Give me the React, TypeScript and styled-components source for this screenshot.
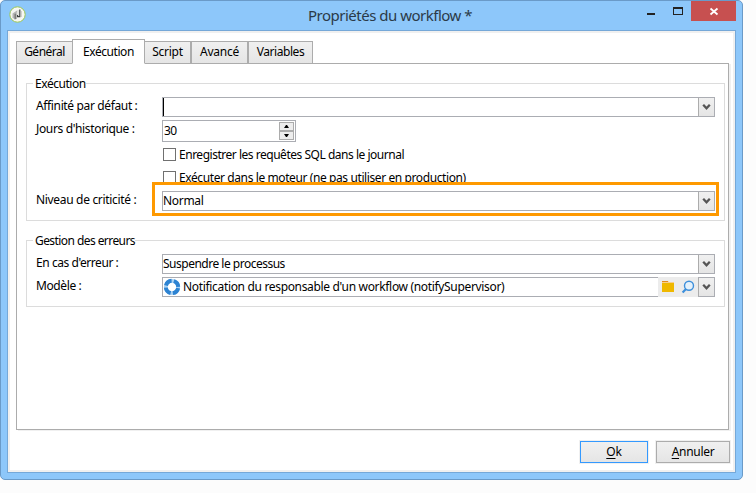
import React from 'react';
import styled, { createGlobalStyle, css } from 'styled-components';

const GlobalStyle = createGlobalStyle`
  *, *::before, *::after { box-sizing: border-box; }
  html, body { margin: 0; background: #fcfcfc; }
  body {
    font-family: 'Noto Sans', 'Open Sans', sans-serif;
    font-size: 12px;
    color: #000;
    overflow: hidden;
  }
`;

const Window = styled.div`
  width: 743px;
  height: 480px;
  padding: 0 6px 6px;
  display: flex;
  flex-direction: column;
  background: #8dc7fa;
  border: 1px solid #6a9ac8;
  border-radius: 5px;
`;

const TitleBar = styled.header`
  flex: none;
  height: 29px;
  display: grid;
  grid-template-columns: 300px 1fr auto;
  align-items: start;
`;

const AppIcon = styled.svg`
  display: block;
  margin: 5px 0 0 2px;
`;

const Title = styled.h1`
  margin: 0 0 0 1px;
  font-size: 15px;
  font-weight: 400;
  line-height: 29px;
  letter-spacing: -0.5px;
  color: #2b3a48;
  white-space: pre;
`;

const WindowControls = styled.div`
  display: flex;
  align-items: flex-start;
`;

const ControlButton = styled.button<{ $close?: boolean }>`
  width: ${(p) => (p.$close ? 45 : 27)}px;
  height: 20px;
  padding: 0;
  border: 0;
  background: ${(p) => (p.$close ? '#c75050' : 'transparent')};

  svg { display: block; }
`;

const Client = styled.main`
  flex: 1;
  display: flex;
  flex-direction: column;
  padding: 8px 5px 7px 6px;
  background: #fff;
  border: 1px solid #75a8d8;
  box-shadow: inset 0 0 0 2px #f0f0f0;
`;

const TabStrip = styled.nav`
  height: 25px;
  margin: 0 0 -1px 2px;
  display: flex;
  align-items: flex-end;
  position: relative;
`;

const Tab = styled.button<{ $width: number; $spacing: number; $active?: boolean }>`
  width: ${(p) => p.$width}px;
  height: 23px;
  padding: 0 0 1px;
  border: 1px solid #acacac;
  background: linear-gradient(#f0f0f0, #e5e5e5);
  font: inherit;
  line-height: 20px;
  color: inherit;
  letter-spacing: ${(p) => p.$spacing}px;
  ${(p) =>
    p.$active &&
    css`
      height: 25px;
      margin: 0 -1px;
      padding: 1px 0 0;
      background: #fff;
      border-bottom-color: #fff;
      z-index: 1;
    `}
`;

const Panel = styled.section`
  width: 713px;
  height: 367px;
  margin-left: 2px;
  padding: 19px 3px 0 9px;
  border: 1px solid #acacac;
  box-shadow: 2px 1px 0 #f0f0f0;
`;

const Group = styled.section<{ $height: number }>`
  height: ${(p) => p.$height}px;
  border: 1px solid #dcdcdc;

  & + & { margin-top: 19px; }
`;

const Legend = styled.h2<{ $spacing: number }>`
  width: max-content;
  height: 16px;
  margin: -9px 0 0 6px;
  padding: 0 0 0 2px;
  background: #fff;
  font-size: 12px;
  font-weight: 400;
  line-height: 17px;
  letter-spacing: ${(p) => p.$spacing}px;
`;

const Row = styled.div<{ $gap: number }>`
  display: grid;
  grid-template-columns: 126px 553px;
  align-items: start;
  margin: ${(p) => p.$gap}px 0 0 9px;
`;

const Label = styled.label<{ $spacing: number }>`
  line-height: 18px;
  letter-spacing: ${(p) => p.$spacing}px;
  white-space: nowrap;
`;

const Combo = styled.div`
  height: 20px;
  display: flex;
  background: #fff;
  border: 1px solid #abadb3;
`;

const Value = styled.span<{ $spacing: number }>`
  flex: 1;
  line-height: 17px;
  letter-spacing: ${(p) => p.$spacing}px;
  white-space: nowrap;
`;

const Caret = styled.i`
  width: 1px;
  height: 18px;
  background: #000;
  margin-right: auto;
`;

const DropButton = styled.span`
  width: 16px;
  display: grid;
  place-items: center;
  border-left: 1px solid #acacac;
  background: linear-gradient(#f0f0f0, #e5e5e5);
`;

const Tool = styled.span<{ $width: number }>`
  width: ${(p) => p.$width}px;
  height: 20px;
  margin: -1px 0;
  background: #ececec;

  svg { display: block; }
`;

const ModelIcon = styled.svg`
  margin: 0 2px 0 0;
`;

const Spinner = styled.div`
  width: 134px;
  height: 22px;
  display: flex;
  padding: 1px;
  border: 1px solid #abadb3;
`;

const SpinButtons = styled.span`
  display: grid;
  grid-template-rows: 9px 9px;
  width: 15px;
`;

const SpinButton = styled.span`
  display: grid;
  place-items: center;
  border: 1px solid #acacac;
  background: #ededed;
`;

const CheckLine = styled.label<{ $gap: number; $spacing: number }>`
  height: 13px;
  margin: ${(p) => p.$gap}px 0 0 136px;
  display: flex;
  align-items: center;
  gap: 3px;
  line-height: 17px;
  letter-spacing: ${(p) => p.$spacing}px;
  white-space: nowrap;
`;

const CheckBox = styled.span`
  flex: none;
  width: 13px;
  height: 13px;
  border: 1px solid #707070;
  background: #fff;
`;

const Highlighted = styled.div`
  position: relative;

  &::before {
    content: '';
    position: absolute;
    inset: -9px -4px -5px -10px;
    background: #fff;
    border: 3px solid #fe9900;
  }

  & > * { position: relative; }
`;

const Footer = styled.footer`
  display: flex;
  justify-content: flex-end;
  gap: 8px;
  margin-top: 11px;
`;

const PushButton = styled.button<{ $width: number; $primary?: boolean }>`
  width: ${(p) => p.$width}px;
  height: 22px;
  padding: 0;
  border: 1px solid ${(p) => (p.$primary ? '#3399ff' : '#acacac')};
  background: linear-gradient(#f0f0f0, #e5e5e5);
  box-shadow: 0 0 0 1px #f0f0f0;
  font: inherit;
  line-height: 20px;
  letter-spacing: ${(p) => (p.$primary ? -0.2 : -0.3)}px;
  color: inherit;

  u { text-underline-offset: 2px; text-decoration-skip-ink: none; }
`;

const Drop = () => (
  <DropButton>
    <svg width="9" height="8" viewBox="0 0 9 8">
      <path d="M1.2 1.7 4.5 5.2 7.8 1.7" fill="none" stroke="#555" strokeWidth="2.3" />
    </svg>
  </DropButton>
);

export default function App() {
  return (
    <>
      <GlobalStyle />
      <Window>
        <TitleBar>
          <AppIcon width="17" height="17" viewBox="0 0 17 17">
            <circle cx="8.5" cy="8.5" r="7.7" fill="#f6f7f3" stroke="#9bc653" />
            <path d="M3.5 7.5 8 4.5v2L6 8v5l-2.5-1z" fill="#b4b5b3" />
            <path d="M5.5 8 7.5 7v6l-2 .5z" fill="#7d7f7d" />
            <path d="M10.8 3.5v7.2H8.6V9" fill="none" stroke="#3f4240" strokeWidth="1.2" />
            <path d="M9 4v5M12.5 5v6" stroke="#d0d2ce" />
          </AppIcon>
          <Title>Propriétés du workflow *</Title>
          <WindowControls>
            <ControlButton aria-label="Réduire">
              <svg width="27" height="20" viewBox="0 0 27 20">
                <path d="M10 12h8v2h-8z" fill="#222" />
              </svg>
            </ControlButton>
            <ControlButton aria-label="Agrandir">
              <svg width="27" height="20" viewBox="0 0 27 20">
                <path d="M9 6h10v8H9zM10 8v5h8V8z" fill="#222" fillRule="evenodd" />
              </svg>
            </ControlButton>
            <ControlButton $close aria-label="Fermer">
              <svg width="45" height="20" viewBox="0 0 45 20">
                <path d="m19.5 7.5 7 6m0-6-7 6" stroke="#fff" strokeWidth="1.8" />
              </svg>
            </ControlButton>
          </WindowControls>
        </TitleBar>
        <Client>
          <TabStrip>
            <Tab $width={57} $spacing={-0.5}>Général</Tab>
            <Tab $width={73} $spacing={-0.45} $active>Exécution</Tab>
            <Tab $width={47} $spacing={-0.25}>Script</Tab>
            <Tab $width={57} $spacing={-0.25}>Avancé</Tab>
            <Tab $width={65} $spacing={-0.45}>Variables</Tab>
          </TabStrip>
          <Panel>
            <Group $height={138}>
              <Legend $spacing={-0.45}>Exécution</Legend>
              <Row $gap={6}>
                <Label $spacing={-0.36}>Affinité par défaut :</Label>
                <Combo><Caret /><Drop /></Combo>
              </Row>
              <Row $gap={3}>
                <Label $spacing={-0.35}>Jours d'historique :</Label>
                <Spinner>
                  <Value $spacing={-0.5}>30</Value>
                  <SpinButtons>
                    <SpinButton>
                      <svg width="5" height="3" viewBox="0 0 5 3"><path d="M0 3h5L3 0H2z" /></svg>
                    </SpinButton>
                    <SpinButton>
                      <svg width="5" height="3" viewBox="0 0 5 3"><path d="M0 0h5L3 3H2z" /></svg>
                    </SpinButton>
                  </SpinButtons>
                </Spinner>
              </Row>
              <CheckLine $gap={6} $spacing={-0.48}>
                <CheckBox />Enregistrer les requêtes SQL dans le journal
              </CheckLine>
              <CheckLine $gap={10} $spacing={-0.4}>
                <CheckBox />Exécuter dans le moteur (ne pas utiliser en production)
              </CheckLine>
              <Row $gap={7}>
                <Label $spacing={-0.32}>Niveau de criticité :</Label>
                <Highlighted>
                  <Combo><Value $spacing={-0.3}>Normal</Value><Drop /></Combo>
                </Highlighted>
              </Row>
            </Group>
            <Group $height={67}>
              <Legend $spacing={-0.57}>Gestion des erreurs</Legend>
              <Row $gap={6}>
                <Label $spacing={-0.44}>En cas d'erreur :</Label>
                <Combo><Value $spacing={-0.5}>Suspendre le processus</Value><Drop /></Combo>
              </Row>
              <Row $gap={3}>
                <Label $spacing={-0.4}>Modèle :</Label>
                <Combo>
                  <ModelIcon width="18" height="18" viewBox="0 0 18 18">
                    <circle cx="9" cy="9" r="6.2" fill="none" stroke="#a9d2f4" strokeWidth="3.8" />
                    <circle
                      cx="9" cy="9" r="6.2" fill="none" stroke="#2d83d2" strokeWidth="4"
                      strokeDasharray="7.4 2.339" strokeDashoffset="-1.17"
                    />
                  </ModelIcon>
                  <Value $spacing={-0.33}>Notification du responsable d'un workflow (notifySupervisor)</Value>
                  <Tool $width={20}>
                    <svg width="20" height="20" viewBox="0 0 20 20">
                      <path d="M4 4h6l1 1h5v3H4z" fill="#f9cf8c" />
                      <path d="M4 4h6v1H4z" fill="#e08a1e" />
                      <path d="M4 6h12v9H4z" fill="#efb800" />
                    </svg>
                  </Tool>
                  <Tool $width={20}>
                    <svg width="20" height="20" viewBox="0 0 20 20">
                      <circle cx="11" cy="8.7" r="4.5" fill="#e4f1fb" stroke="#3d8fdb" strokeWidth="1.4" />
                      <path d="m8 12-3.4 3.5" stroke="#3d8fdb" strokeWidth="2.2" />
                    </svg>
                  </Tool>
                  <Drop />
                </Combo>
              </Row>
            </Group>
          </Panel>
          <Footer>
            <PushButton $width={68} $primary><u>O</u>k</PushButton>
            <PushButton $width={74}><u>A</u>nnuler</PushButton>
          </Footer>
        </Client>
      </Window>
    </>
  );
}
